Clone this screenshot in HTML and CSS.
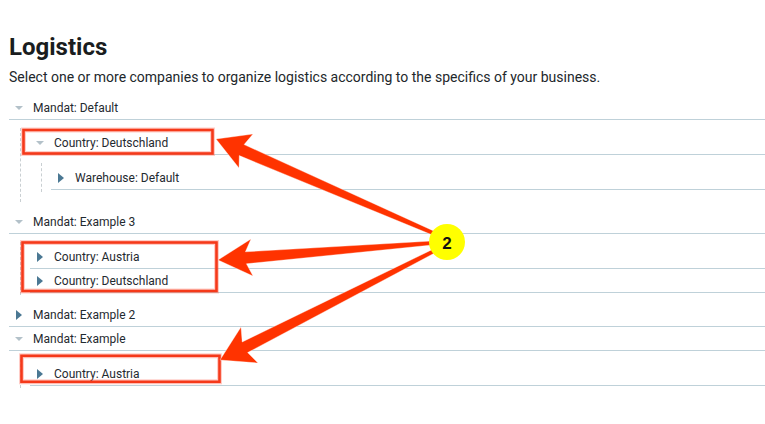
FILE: index.html
```html
<!DOCTYPE html>
<html lang="en">
<head>
<meta charset="utf-8">
<title>Logistics</title>
<link rel="stylesheet" href="styles.css">
</head>
<body>
<div class="page">
  <h1 class="title">Logistics</h1>
  <p class="subtitle">Select one or more companies to organize logistics according to the specifics of your business.</p>

  <div class="tree">
    <div class="node">
      <div class="row"><span class="caret"><span class="tri-down"></span></span><span class="label">Mandat: Default</span></div>
      <div class="children">
        <div class="node">
          <div class="row"><span class="caret"><span class="tri-down"></span></span><span class="label">Country: Deutschland</span></div>
          <div class="children">
            <div class="node">
              <div class="row"><span class="caret"><span class="tri-right"></span></span><span class="label">Warehouse: Default</span></div>
            </div>
          </div>
        </div>
      </div>
    </div>

    <div class="node">
      <div class="row"><span class="caret"><span class="tri-down"></span></span><span class="label">Mandat: Example 3</span></div>
      <div class="children">
        <div class="node">
          <div class="row"><span class="caret"><span class="tri-right"></span></span><span class="label">Country: Austria</span></div>
        </div>
        <div class="node">
          <div class="row"><span class="caret"><span class="tri-right"></span></span><span class="label">Country: Deutschland</span></div>
        </div>
      </div>
    </div>

    <div class="node">
      <div class="row"><span class="caret"><span class="tri-right"></span></span><span class="label">Mandat: Example 2</span></div>
    </div>

    <div class="node">
      <div class="row"><span class="caret"><span class="tri-down"></span></span><span class="label">Mandat: Example</span></div>
      <div class="children">
        <div class="node">
          <div class="row"><span class="caret"><span class="tri-right"></span></span><span class="label">Country: Austria</span></div>
        </div>
      </div>
    </div>
  </div>

  <svg class="annot" width="765" height="424" viewBox="0 0 765 424" xmlns="http://www.w3.org/2000/svg">
    <g class="boxes">
      <rect class="box-halo" x="23.5" y="130" width="189" height="23.5"/>
      <rect class="box" x="23.5" y="130" width="189" height="23.5"/>
      <rect class="box-halo" x="22.5" y="242.5" width="194" height="48.5"/>
      <rect class="box" x="22.5" y="242.5" width="194" height="48.5"/>
      <rect class="box-halo" x="21.5" y="355.8" width="198" height="26"/>
      <rect class="box" x="21.5" y="355.8" width="198" height="26"/>
    </g>
    <g class="arrows">
      <polygon points="216,139 253,134 244.1,144.6 440.8,234.2 439.2,237.8 239.3,155.6 239,168"/>
      <polygon points="218,260 251,239 245.4,251.8 431.8,241 432.2,245 246.4,263.8 253,276"/>
      <polygon points="220,360 241,327 242.2,342 435.1,248.2 436.9,251.8 247.6,352.6 258,363"/>
    </g>
    <circle class="badge" cx="447" cy="242" r="18"/>
    <text class="badge-text" x="447" y="248.5" text-anchor="middle">2</text>
  </svg>
</div>
</body>
</html>
```

FILE: styles.css
```css
html, body {
  margin: 0;
  padding: 0;
  background: #ffffff;
}

.page {
  position: relative;
  width: 765px;
  height: 424px;
  overflow: hidden;
  box-sizing: border-box;
  padding: 33px 0 0 9px;
  font-family: Roboto, "Liberation Sans", sans-serif;
  color: #1e262b;
}

.title {
  margin: 0;
  font-size: 24px;
  line-height: 28px;
  font-weight: 700;
  color: #1a1d20;
}

.subtitle {
  margin: 8px 0 0 0;
  font-size: 14px;
  line-height: 16px;
  color: #22272b;
}

.tree {
  margin-top: 11px;
}

.row {
  display: flex;
  align-items: center;
  height: 23px;
  border-bottom: 1px solid #bfd1d9;
  font-size: 12px;
  color: #1f2a30;
}

.caret {
  width: 20px;
  height: 23px;
  display: flex;
  align-items: center;
  justify-content: center;
  flex: none;
}

.label {
  margin-left: 4px;
  white-space: nowrap;
}

.tri-down {
  width: 0;
  height: 0;
  border-left: 4px solid transparent;
  border-right: 4px solid transparent;
  border-top: 4.5px solid #b3c1c9;
}

.tri-right {
  width: 0;
  height: 0;
  margin-top: 1px;
  border-top: 5.5px solid transparent;
  border-bottom: 5.5px solid transparent;
  border-left: 6px solid #4b7893;
}

.children {
  margin: 8px 0 8px 11px;
  padding: 3px 0 2px 9px;
  border-left: 1px dashed #c9cfd2;
}

.annot {
  position: absolute;
  left: 0;
  top: 0;
  pointer-events: none;
}

.box {
  fill: none;
  stroke: #f5391a;
  stroke-width: 2.6;
}

.box-halo {
  fill: none;
  stroke: rgba(255, 90, 70, 0.3);
  stroke-width: 5;
}

.arrows polygon {
  fill: #ff3300;
  stroke: rgba(255, 255, 255, 0.6);
  stroke-width: 0.6;
  stroke-linejoin: round;
}

.badge {
  fill: #ffff00;
}

.badge-text {
  font-family: "Liberation Sans", Arial, sans-serif;
  font-weight: 700;
  font-size: 17px;
  fill: #111111;
}
```
